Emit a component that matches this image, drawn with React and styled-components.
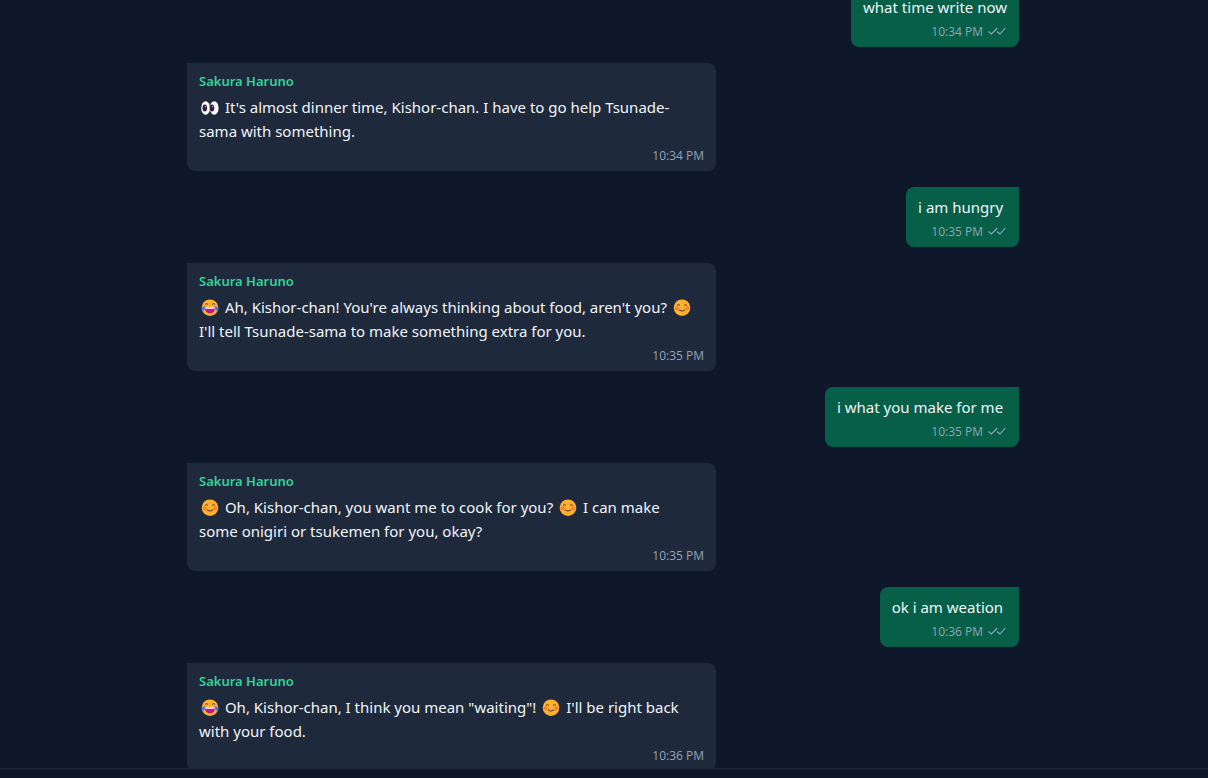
import React from "react";
import styled, { createGlobalStyle } from "styled-components";

const Global = createGlobalStyle`
  *, *::before, *::after { box-sizing: border-box; }
  body { margin: 0; background: #0f172a; font-family: "Segoe UI", "Noto Sans", "Open Sans", sans-serif; }
  p, ol { margin: 0; padding: 0; }
`;

const Page = styled.div`
  display: flex;
  flex-direction: column;
  height: 100vh;
  background: #0f172a;
`;

const Conversation = styled.main`
  flex: 1;
  min-height: 0;
  overflow: hidden;
  padding: 0 34px 0 32px;
`;

const MessageList = styled.ol`
  display: flex;
  flex-direction: column;
  gap: 16px;
  width: 100%;
  max-width: 832px;
  margin: -13px auto 0;
  list-style: none;
`;

const Row = styled.li`
  display: flex;
  justify-content: ${({ $own }) => ($own ? "flex-end" : "flex-start")};
`;

const Bubble = styled.article`
  width: ${({ $own }) => ($own ? "auto" : "100%")};
  max-width: 529px;
  padding: 8px 12px 7px;
  border-radius: ${({ $own }) => ($own ? "8px 0 8px 8px" : "0 8px 8px 8px")};
  background: ${({ $own }) => ($own ? "#065f46" : "#1e293b")};
  color: #f1f5f9;
`;

const Sender = styled.p`
  margin-bottom: 4px;
  font-size: 13px;
  font-weight: 600;
  line-height: 20px;
  color: #34d399;
`;

const Text = styled.p`
  font-size: 15px;
  line-height: 24px;
  white-space: break-spaces;
`;

const Meta = styled.p`
  display: flex;
  align-items: center;
  justify-content: flex-end;
  gap: 4px;
  margin-top: 5px;
  font-family: "Segoe UI", "Open Sans", sans-serif;
  font-size: 12px;
  line-height: 16px;
  color: #94a3b8;
`;

const EmojiSvg = styled.svg`
  display: inline-block;
  width: 22px;
  height: 18px;
  vertical-align: -4px;
`;

const Footer = styled.footer`
  flex: none;
  height: 10px;
  border-top: 1px solid #1e293b;
`;

const Ticks = () => (
  <svg width="20" height="16" viewBox="0 0 20 16" fill="none" stroke="#94a3b8" strokeWidth="1.1" role="img" aria-label="Read">
    <path d="M1.5 7.500 4.500 10 10.300 4M10 7.500 13 10 18.300 4" />
  </svg>
);

const Eyes = () => (
  <EmojiSvg viewBox="0 0 22 18" role="img" aria-label="Eyes">
    <ellipse cx="6.6" cy="9" rx="4.4" ry="6.7" fill="#fff" />
    <ellipse cx="15.2" cy="9" rx="4.4" ry="6.7" fill="#fff" />
    <ellipse cx="5.8" cy="9" rx="2.3" ry="3.4" fill="#321b41" />
    <ellipse cx="13" cy="9" rx="2.3" ry="3.4" fill="#321b41" />
    <circle cx="6.6" cy="7.6" r="0.7" fill="#d8cfe0" />
    <circle cx="13.8" cy="7.6" r="0.7" fill="#d8cfe0" />
  </EmojiSvg>
);

const Joy = () => (
  <EmojiSvg viewBox="0 0 22 18" role="img" aria-label="Tears of joy">
    <circle cx="11" cy="8.7" r="8.3" fill="#ffb02e" />
    <path d="M6 5.600Q7.500 3.400 9 5.600M13 5.600Q14.500 3.400 16 5.600" fill="none" stroke="#402a32" strokeWidth="0.9" />
    <path d="M6 8.200h10q0 6.200-5 6.200T6 8.200Z" fill="#bb1d80" />
    <path d="M6 8.200h10l-.4 1.500H6.400Z" fill="#fff" />
    <path d="M6.500 7Q2.600 7.600 2.400 10.800q.8 1.600 2.400.6Q6.300 10 6.500 7ZM15.500 7q3.900.6 4.100 3.800-.8 1.600-2.400.6Q15.700 10 15.500 7Z" fill="#4b6cff" />
  </EmojiSvg>
);

const Blush = () => (
  <EmojiSvg viewBox="0 0 22 18" role="img" aria-label="Smiling">
    <circle cx="11" cy="8.7" r="8.3" fill="#ffb02e" />
    <circle cx="5.700" cy="9.200" r="1.900" fill="#ff7a3d" />
    <circle cx="16.300" cy="9.200" r="1.900" fill="#ff7a3d" />
    <path d="M6 6.600Q7.500 4.200 9 6.600M13 6.600Q14.500 4.200 16 6.600M7.800 10.800Q11 13.600 14.200 10.800" fill="none" stroke="#402a32" strokeWidth="0.9" />
  </EmojiSvg>
);

const messages = [
  { own: true, time: "10:34 PM", body: "what time write now" },
  {
    time: "10:34 PM",
    body: <><Eyes /> It's almost dinner time, Kishor-chan. I have to go help Tsunade-<br />sama with something.</>,
  },
  { own: true, time: "10:35 PM", body: "i am hungry " },
  {
    time: "10:35 PM",
    body: <><Joy /> Ah, Kishor-chan! You're always thinking about food, aren't you? <Blush /><br />I'll tell Tsunade-sama to make something extra for you.</>,
  },
  { own: true, time: "10:35 PM", body: "i what you make for me " },
  {
    time: "10:35 PM",
    body: <><Blush /> Oh, Kishor-chan, you want me to cook for you? <Blush /> I can make<br />some onigiri or tsukemen for you, okay?</>,
  },
  { own: true, time: "10:36 PM", body: "ok i am weation " },
  {
    time: "10:36 PM",
    body: <><Joy /> Oh, Kishor-chan, I think you mean "waiting"! <Blush /> I'll be right back<br />with your food.</>,
  },
];

const Message = ({ own, time, body }) => (
  <Row $own={own}>
    <Bubble $own={own}>
      {!own && <Sender>Sakura Haruno</Sender>}
      <Text>{body}</Text>
      <Meta>
        <time>{time}</time>
        {own && <Ticks />}
      </Meta>
    </Bubble>
  </Row>
);

export default function App() {
  return (
    <Page>
      <Global />
      <Conversation>
        <MessageList>
          {messages.map((message, index) => (
            <Message key={index} {...message} />
          ))}
        </MessageList>
      </Conversation>
      <Footer />
    </Page>
  );
}
